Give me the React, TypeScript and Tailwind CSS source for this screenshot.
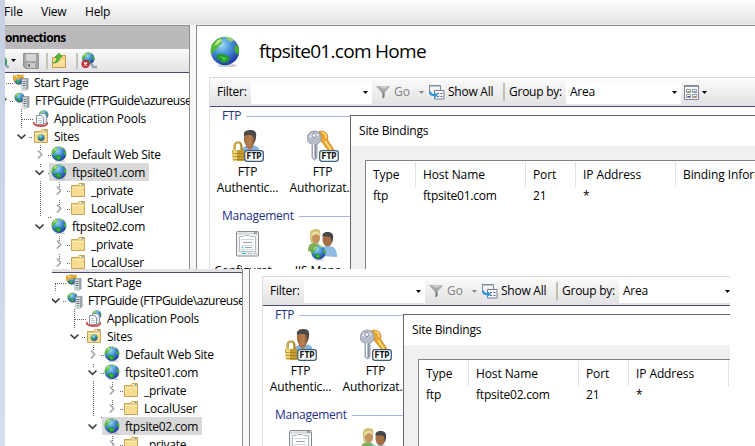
import React from "react";

const FONT = "font-['Open_Sans','Noto_Sans',sans-serif]";

function GlobeShape({ id }: { id: string }) {
  return (
    <>
      <defs>
        <radialGradient id={id} cx="0.38" cy="0.28" r="0.8">
          <stop offset="0" stopColor="#a5daf6" />
          <stop offset="0.4" stopColor="#4a96d6" />
          <stop offset="0.8" stopColor="#2a4bb2" />
          <stop offset="1" stopColor="#1f3890" />
        </radialGradient>
      </defs>
      <ellipse cx="17" cy="29.6" rx="10" ry="1.8" fill="#777" opacity="0.35" />
      <circle cx="15" cy="15" r="14.2" fill={`url(#${id})`} />
      <path d="M5 5C8 2 11 1 13 2L11 5L12 8L9 9L7 13L4 15L1 19C0 13 1 8 5 5Z" fill="#55b83c" />
      <path d="M7 5C9 3 11 3 12 4L8 8L4 10Z" fill="#c5eb83" />
      <path d="M15 1C18 0 22 2 24 4L21 6L18 4Z" fill="#9ad46e" />
      <path d="M26 8C29 11 30 15 28 19L25 16L24 12Z" fill="#46b02f" />
      <path d="M8 18L13 18L20 21L18 26L13 27L9 24L6 21Z" fill="#239b2c" />
      <path d="M10 20L17 22L14 25Z" fill="#49c93e" />
    </>
  );
}

function Globe({ id, className }: { id: string; className: string }) {
  return (
    <svg viewBox="0 0 30 31" className={className}>
      <GlobeShape id={id} />
    </svg>
  );
}

function ServerIcon({ id, star }: { id: string; star?: boolean }) {
  return (
    <svg viewBox="0 0 16 17" className="h-[17px] w-4 shrink-0">
      <g transform="scale(.35) translate(1 1)">
        <GlobeShape id={id} />
      </g>
      {star && <path d="M0 1L3 2L5 0L7 2L10 0L11 4L8 4L6 6L4 4L2 8L0 5Z" fill="#eba431" />}
      {star && <path d="M2 2L5 2L4 4Z" fill="#ffe493" />}
      <path d="M8.500 5L11 4H15.500V15L13 16.500H8.500Z" fill="#9da4ab" />
      <path d="M9 5.500H13V16H9Z" fill="#d9dee3" />
      <path d="M9.500 7.500H12.500M9.500 9.500H12.500M9.500 11.500H12.500" stroke="#68727c" />
      <path d="M10 14H12" stroke="#43b348" />
    </svg>
  );
}

function PoolsIcon({ id }: { id: string }) {
  return (
    <svg viewBox="0 0 16 17" className="h-[17px] w-4 shrink-0">
      <g transform="translate(6 0) scale(.32)">
        <GlobeShape id={id} />
      </g>
      <path d="M1 12C0 15 4 16 8 16C12 16 15 15 14 12" fill="none" stroke="#d25050" strokeWidth="1.8" />
      <path d="M6.500 3.500H11.500L13.500 6V13.500H6.500Z" fill="#e9eef2" stroke="#8799a8" />
      <path d="M3.500 5.500H8.500L10.500 8V14.500H3.500Z" fill="#fff" stroke="#8593a0" />
      <path d="M5 8.500H8M5 10.500H9M5 12.500H9" stroke="#bcc5cd" />
    </svg>
  );
}

function FolderIcon({ web, id }: { web?: boolean; id: string }) {
  return (
    <svg viewBox="0 0 16 16" className="h-4 w-4 shrink-0">
      <path d="M1.500 3.500H7.500L9 1.500H14.500V14.500H1.500Z" fill="#f0cd77" stroke="#c9a654" />
      <path d="M2 5H14V14H2Z" fill="#f7dc94" />
      <path d="M2 5.500H14" stroke="#fff0bf" />
      <path d="M9.500 2.500H13.500" stroke="#fff" />
      <path d="M11.500 2.500H13.500" stroke="#4c99d6" />
      {web && (
        <g transform="translate(4.500 6) scale(.24)">
          <GlobeShape id={id} />
        </g>
      )}
    </svg>
  );
}

type Kind = "start" | "server" | "pools" | "sites" | "site" | "folder";
type Row = { label: string; kind: Kind; pad: string; open?: boolean; leaf?: boolean; tracking?: string };

const rows: Row[] = [
  { label: "Start Page", kind: "start", pad: "pl-[2px]", leaf: true },
  { label: "FTPGuide (FTPGuide\\azureuse", kind: "server", pad: "pl-[3px]", open: true, tracking: "tracking-[-0.46px]" },
  { label: "Application Pools", kind: "pools", pad: "pl-[22px]", leaf: true },
  { label: "Sites", kind: "sites", pad: "pl-[22px]", open: true },
  { label: "Default Web Site", kind: "site", pad: "pl-[40px]" },
  { label: "ftpsite01.com", kind: "site", pad: "pl-[40px]", open: true },
  { label: "_private", kind: "folder", pad: "pl-[59px]" },
  { label: "LocalUser", kind: "folder", pad: "pl-[59px]" },
  { label: "ftpsite02.com", kind: "site", pad: "pl-[40px]", open: true },
  { label: "_private", kind: "folder", pad: "pl-[59px]" },
  { label: "LocalUser", kind: "folder", pad: "pl-[59px]" },
];

function TreeIcon({ kind, id }: { kind: Kind; id: string }) {
  if (kind === "start") return <ServerIcon id={id} star />;
  if (kind === "server") return <ServerIcon id={id} />;
  if (kind === "pools") return <PoolsIcon id={id} />;
  if (kind === "sites") return <FolderIcon id={id} web />;
  if (kind === "folder") return <FolderIcon id={id} />;
  return <Globe id={id} className="h-4 w-4 shrink-0" />;
}

function Tree({ name, selected }: { name: string; selected: string }) {
  return (
    <div className="relative w-[260px] bg-white">
      <svg className="absolute inset-0 h-[200px] w-[110px]" fill="none" stroke="#666" strokeDasharray="1 1">
        <path d="M8.500 11V18M8 10.500H20M16 28.500H20M27.500 36V56M28 46.500H39M35 64.500H39M54 82.500H58M54 100.500H58M46.500 108V144M54 144.500H58M73 118.500H77M73 136.500H77M73 172.500H77M73 190.500H77M65.500 109V114M65.500 127V132M65.500 163V168M65.500 181V186M46.500 72V77M46.500 91V95" />
      </svg>
      {rows.map((r, i) => (
        <div key={i} className={`relative flex h-[18px] items-center ${r.pad}`}>
          <svg viewBox="0 0 11 10" className="mr-[6px] h-[10px] w-[11px] shrink-0" fill="none" strokeWidth="1.7">
            {!r.leaf && r.open && <path d="M1.500 3.500L5.500 7.300L9.500 3.500" stroke="#404040" />}
            {!r.leaf && !r.open && <path d="M4 1.500L7.600 5.500L4 9.500" stroke="#a6a6a6" />}
          </svg>
          <div
            className={`flex h-[18px] items-center gap-1 ${
              r.label === selected ? "-ml-[2px] bg-[#d9d9d9] pr-[4px] pl-[2px]" : ""
            }`}
          >
            <TreeIcon kind={r.kind} id={`${name}-t${i}`} />
            <span className={`ml-px leading-[17px] whitespace-nowrap ${r.tracking ?? "tracking-[-0.25px]"}`}>
              {r.label}
            </span>
          </div>
        </div>
      ))}
    </div>
  );
}

function Caret({ className, dim }: { className: string; dim?: boolean }) {
  return (
    <svg viewBox="0 0 5 3" className={`h-[3px] w-[5px] shrink-0 ${className}`}>
      <path d="M0 0H5L2.500 3Z" fill={dim ? "#888" : "#000"} />
    </svg>
  );
}

function FilterBar() {
  return (
    <div className="flex h-[30px] w-[620px] items-center border-t border-b border-t-[#d9d9d9] border-b-[#4a4a72] bg-linear-to-b from-[#fcfcfc] to-[#e2e0e2] pl-[7px] whitespace-nowrap">
      <span className="w-[34px] tracking-[-0.25px]">Filter:</span>
      <div className="flex h-[23px] w-[121px] items-center justify-end bg-white pr-[4px]">
        <Caret className="" />
      </div>
      <svg viewBox="0 0 15 14" className="ml-[4px] h-[14px] w-[15px] shrink-0">
        <path d="M0 1L14 1.500L9 7V12L6 13.500V8Z" fill="#a8a8a8" />
        <path d="M2 1.500H12L8 4Z" fill="#d2d2d2" />
        <path d="M6 7L7.500 8V13" stroke="#7f7f7f" fill="none" />
      </svg>
      <span className="ml-[3px] w-[27px] text-[#808080]">Go</span>
      <Caret className="-ml-[2px]" dim />
      <svg viewBox="0 0 17 16" className="ml-[4px] h-4 w-[17px] shrink-0">
        <path d="M1 1.500H12.500V6M1.500 1V9" fill="none" stroke="#808c98" />
        <path d="M2 2.500H12" stroke="#bdc7d0" />
        <path d="M6.500 6.500H16V15H6.500Z" fill="#f3f7fb" stroke="#77818d" />
        <path d="M9 9.500H11M12.500 9.500H14.500M9 12.500H11M12.500 12.500H14.500" stroke="#575f99" />
        <path d="M1 9C2 12 4 12 6 12V14.500L10 11L6 8V10C4 10 3 9 3 7Z" fill="#2f91d7" />
      </svg>
      <span className="ml-[3px] w-[55px] tracking-[-0.25px]">Show All</span>
      <div className="h-[18px] w-[2px] bg-[#c0bfae]" />
      <span className="ml-[4px] w-[57px] tracking-[-0.25px]">Group by:</span>
      <div className="flex h-[23px] w-[115px] items-center justify-between bg-white pr-[4px] pl-[4px]">
        <span className="tracking-[-0.25px]">Area</span>
        <Caret className="" />
      </div>
      <svg viewBox="0 0 15 15" className="ml-[3px] h-[15px] w-[15px] shrink-0">
        <path d="M.5 .5H14.500V14.500H.5Z" fill="#f4f5f6" stroke="#7f8790" />
        <path d="M1 1.500H14" stroke="#929ba4" />
        <path d="M2.500 4.500H6.500V7.500H2.500ZM8.500 4.500H12.500V7.500H8.500ZM2.500 9.500H6.500V12.500H2.500ZM8.500 9.500H12.500V12.500H8.500Z" fill="#fff" stroke="#949aa1" />
        <path d="M3.500 6.500H6" stroke="#80a22e" />
        <path d="M9.500 6.500H12" stroke="#3ea0cf" />
        <path d="M3.500 11.500H6" stroke="#5347b4" />
        <path d="M9.500 11.500H12" stroke="#d5734b" />
      </svg>
      <Caret className="ml-[3px]" />
    </div>
  );
}

function FtpTag() {
  return (
    <>
      <rect x="12.700" y="20.700" width="18.600" height="10.600" rx="2.500" fill="#fff" stroke="#3d5d77" strokeWidth="1.300" />
      <text x="14.500" y="29" fontSize="8" fontWeight="700" fontFamily="DejaVu Sans, sans-serif" textLength="15" lengthAdjust="spacingAndGlyphs" fill="#111">
        FTP
      </text>
    </>
  );
}

function AuthIcon({ id }: { id: string }) {
  return (
    <svg viewBox="0 0 32 32" className="h-8 w-8">
      <defs>
        <linearGradient id={id}>
          <stop stopColor="#a26a3e" />
          <stop offset=".6" stopColor="#b98255" />
          <stop offset="1" stopColor="#714626" />
        </linearGradient>
      </defs>
      <path d="M9 22C10 17 14 15 18 15C24 15 28 17 28 23Z" fill="#84b1de" />
      <path d="M14 14H21V17L18 20L14 17Z" fill="#a9704a" />
      <ellipse cx="17.500" cy="9" rx="5.700" ry="7.700" fill={`url(#${id})`} />
      <path d="M12 6C11 1 15 0 19 0C25 0 25 5 23 12L21.500 6C18 4.500 15 4.500 12 6Z" fill="#4a4a4a" />
      <path d="M2.500 21V17C2.500 11 9.500 11 9.500 17V21" fill="none" stroke="#a58121" strokeWidth="2.200" />
      <path d="M2.200 20V16.500C2.500 12.500 7 11.500 8.700 14.500" fill="none" stroke="#e4cb70" />
      <path d="M0 20H12V31H1Z" fill="#c49b2c" />
      <path d="M1 20H5V31H1Z" fill="#eed477" />
      <path d="M1 23.500H12M1 26.500H12M1 29.500H12" stroke="#987621" strokeWidth=".6" />
      <FtpTag />
    </svg>
  );
}

function KeysIcon() {
  return (
    <svg viewBox="0 0 32 32" className="h-8 w-8">
      <path d="M12 1.500C18 0 22 4 20.500 10L27 20H21L15 12L11 9Z" fill="#eba52e" stroke="#c4811e" strokeWidth=".8" />
      <path d="M15 2.500C18 2.500 19 5 19 8M18 11L24 20" stroke="#ffdf84" fill="none" strokeWidth="1.600" />
      <path d="M1 5C3 0 11 0 13 4C16 9 13 13 10 14V28L7.500 30L5 28V14C0 13-1 8 1 5Z" fill="#b6bdc8" stroke="#858d9c" strokeWidth=".8" />
      <path d="M2 7C4 2 9 2 12 5L8 8Z" fill="#e9edf2" />
      <path d="M6.500 14V28" stroke="#f4f6f8" />
      <circle cx="7" cy="5.500" r="2" fill="#fff" stroke="#7c8594" />
      <path d="M8.500 14V28" stroke="#8b93a1" />
      <FtpTag />
    </svg>
  );
}

function ConfigIcon() {
  return (
    <svg viewBox="0 0 24 26" className="h-[26px] w-6">
      <rect x=".5" y=".5" width="22" height="24.500" rx="1" fill="#f1f2f3" stroke="#858a8e" />
      <path d="M1 2.500H22" stroke="#d2d6da" strokeWidth="2" />
      <path d="M18 2H21" stroke="#536777" />
      <path d="M3.500 5.500H8L9 4.500H13L14 5.500H19.500V20.500H3.500Z" fill="#fff" stroke="#b5bac0" />
      <path d="M5 8.500H18M5 14.500H18M5 18.500H18" stroke="#d4d8dc" />
      <path d="M7 11.500H16M9 16.500H16" stroke="#95a0ab" />
      <circle cx="6.500" cy="16.500" r=".8" fill="#4aa9cc" />
      <path d="M6 22.500H10" stroke="#16bfe5" />
      <path d="M12 22.500H16M17.500 22.500H21" stroke="#b1b6bb" />
    </svg>
  );
}

function UsersIcon({ id }: { id: string }) {
  return (
    <svg viewBox="0 0 32 32" className="h-8 w-8">
      <path d="M1 22C1 16 3 14 8 14C12 14 15 17 14 23L7 24Z" fill="#87ae59" />
      <path d="M15 27C13 19 16 17 21 17C27 17 30 20 30 28Z" fill="#8dbbe2" />
      <path d="M3 8C2 2 5 0 9 0C14 0 14 3 13 8L12 14H4Z" fill="#d2c176" />
      <ellipse cx="9" cy="8.500" rx="4" ry="6" fill="#c49163" />
      <path d="M4 8C4 1 13 1 13 7L9 5Z" fill="#eadd9e" />
      <ellipse cx="20.500" cy="11" rx="5" ry="6.500" fill="#a56f45" />
      <path d="M15.500 8C15 3 19 3 21 3C27 3 27 8 25 14L23.500 8C20 7 18 7 15.500 8Z" fill="#464646" />
      <g transform="translate(4 16) scale(.5)">
        <GlobeShape id={id} />
      </g>
    </svg>
  );
}

function Feature({ icon, lines }: { icon: React.ReactNode; lines: string[] }) {
  return (
    <div className="flex w-[75px] flex-col items-center">
      <div className="flex h-[34px] items-start justify-center">{icon}</div>
      {lines.map((l) => (
        <span key={l} className="h-4 leading-4 tracking-[-0.15px] whitespace-nowrap">
          {l}
        </span>
      ))}
    </div>
  );
}

function GroupTitle({ text }: { text: string }) {
  return (
    <div className="flex h-[18px] items-center gap-[5px] pl-[12px] text-[#1e2f87]">
      <span className="leading-[18px] tracking-[-0.25px]">{text}</span>
      <div className="h-px flex-1 bg-[#a9b5df]" />
    </div>
  );
}

const cols = [
  { head: "Type", w: "w-[50px]" },
  { head: "Host Name", w: "w-[110px]" },
  { head: "Port", w: "w-[50px]" },
  { head: "IP Address", w: "w-[100px]" },
  { head: "Binding Informa", w: "w-[110px]" },
];

function BindingsDialog({ host }: { host: string }) {
  const values = ["ftp", host, "21", "*", ""];
  return (
    <div className="absolute top-[8px] left-[140px] h-[300px] w-[500px] border-t border-l border-[#66666a] bg-[#f0f0f0]">
      <div className="flex h-[30px] items-center bg-white pl-[8px]">
        <span className="tracking-[-0.2px]">Site Bindings</span>
      </div>
      <div className="mt-[14px] ml-[14px] h-[260px] w-[500px] border-t border-l border-[#82828a] bg-white pt-px">
        <div className="flex h-[25px]">
          {cols.map((c) => (
            <div key={c.head} className={`${c.w} flex shrink-0 items-center border-r border-[#e2e2e2] pl-[7px]`}>
              <span className="tracking-[-0.1px] whitespace-nowrap">{c.head}</span>
            </div>
          ))}
        </div>
        <div className="flex h-[18px]">
          {cols.map((c, i) => (
            <div key={c.head} className={`${c.w} flex shrink-0 items-center pl-[7px]`}>
              <span className="tracking-[-0.2px] whitespace-nowrap">{values[i]}</span>
            </div>
          ))}
        </div>
      </div>
    </div>
  );
}

function Features({ name, host }: { name: string; host: string }) {
  return (
    <div className="ml-[12px] w-[620px]">
      <div className="border-l border-[#dcdcdc]">
        <FilterBar />
      </div>
      <div className="relative h-[200px] border-l border-[#dcdcdc]">
        <GroupTitle text="FTP" />
        <div className="mt-[5px] flex">
          <Feature icon={<AuthIcon id={`${name}-face`} />} lines={["FTP", "Authentic..."]} />
          <Feature icon={<KeysIcon />} lines={["FTP", "Authorizat..."]} />
        </div>
        <div className="mt-[11px]">
          <GroupTitle text="Management" />
        </div>
        <div className="mt-[4px] flex">
          <Feature
            icon={
              <div className="h-[36px] shrink-0 pt-[2px]">
                <ConfigIcon />
              </div>
            }
            lines={["Configurat..."]}
          />
          <Feature icon={<UsersIcon id={`${name}-users`} />} lines={["IIS Mana..."]} />
        </div>
        <BindingsDialog host={host} />
      </div>
    </div>
  );
}

function ConnectionsBar() {
  return (
    <div className="flex h-6 items-center border-b border-[#4a4a72] bg-linear-to-b from-[#fbfbfb] to-[#e3e1e3]">
      <svg viewBox="0 0 5 12" className="mt-[2px] h-3 w-[5px]">
        <path d="M0 1L2 4V10H0Z" fill="#3a9f69" />
        <path d="M1 8L4 10V12H1Z" fill="#8ca4b9" />
      </svg>
      <Caret className="ml-px" />
      <svg viewBox="0 0 16 16" className="ml-[7px] h-4 w-4">
        <path d="M.5 .5H15.500V15.500H2.500L.5 13.500Z" fill="#a5a5a5" stroke="#929292" />
        <path d="M3 1H13V8H3Z" fill="#d4d4d4" />
        <path d="M4 10H12V15H4Z" fill="#c9c9c9" />
        <path d="M5 11H7V14H5Z" fill="#777" />
      </svg>
      <div className="ml-[7px] h-4 w-[2px] bg-[#c5c5b5]" />
      <svg viewBox="0 0 16 16" className="ml-[3px] h-4 w-4">
        <path d="M1.500 4.500H8L10 2.500H14.500V14.500H1.500Z" fill="#f3d47f" stroke="#c69c43" />
        <path d="M2 7H14V14H2Z" fill="#f9df98" />
        <path d="M2 10C5 9 6 7 6 4H4L8 0L11 4H9C9 8 6 10 2 10Z" fill="#4fb83d" stroke="#2c902d" strokeWidth=".6" />
      </svg>
      <div className="ml-[9px] h-4 w-[2px] bg-[#c5c5b5]" />
      <svg viewBox="0 0 17 17" className="ml-[3px] h-[17px] w-[17px]">
        <g transform="translate(1 0) scale(.43)">
          <GlobeShape id="disconnect" />
        </g>
        <path d="M10 11L12 15H16" fill="none" stroke="#94a6b5" strokeWidth="2.400" />
        <circle cx="4.500" cy="12" r="4" fill="#c02b35" />
        <path d="M3 10.500L6 13.500M6 10.500L3 13.500" stroke="#fff" strokeWidth="1.400" />
      </svg>
    </div>
  );
}

export default function App() {
  return (
    <div className={`flex h-[446px] w-[755px] overflow-hidden bg-white text-[12px] text-black ${FONT}`}>
      <div className="w-[5px] shrink-0 bg-linear-to-b from-[#c8d1e4] to-[#d4deec]" />
      <div className="flex w-[750px] flex-col">
        <section className="h-[269px] overflow-hidden bg-[#f7f7f7]">
          <nav className="flex h-[25px] items-center border-b border-[#efefef] bg-linear-to-b from-[#fdfdfd] to-[#e3e3e3]">
            <span className="-ml-px w-[37px]">File</span>
            <span className="w-[44px] tracking-[-0.2px]">View</span>
            <span className="tracking-[-0.2px]">Help</span>
          </nav>
          <div className="flex h-[244px] gap-[6px]">
            <div className="w-[185px] shrink-0 overflow-hidden border-t border-r border-[#8e8e8e] bg-white">
              <div className="flex h-[23px] items-center bg-[#bcb9bc] font-bold">
                <span className="tracking-[-0.6px]">onnections</span>
              </div>
              <ConnectionsBar />
              <div className="-ml-[11px]">
                <Tree name="a" selected="ftpsite01.com" />
              </div>
            </div>
            <div className="min-w-0 flex-1 overflow-hidden border-t border-l border-[#858b8d] bg-white">
              <div className="flex h-[51px] items-center pl-[13px]">
                <Globe id="home" className="h-[31px] w-[30px] shrink-0" />
                <span className="ml-[19px] text-[19px] tracking-[-0.7px] whitespace-nowrap">ftpsite01.com Home</span>
              </div>
              <Features name="a" host="ftpsite01.com" />
            </div>
          </div>
        </section>
        <section className="ml-[47px] flex h-[177px] w-[678px] gap-[6px] overflow-hidden bg-[#f7f7f7]">
          <div className="w-[191px] shrink-0 overflow-hidden border-r border-[#8e8e8e] bg-white">
            <div className="h-[4px] border-b border-[#4a4a72] bg-[#e3e1e3]" />
            <div className="-ml-[5px]">
              <Tree name="b" selected="ftpsite02.com" />
            </div>
          </div>
          <div className="min-w-0 flex-1 overflow-hidden border-l border-[#858b8d] bg-white pt-[7px]">
            <Features name="b" host="ftpsite02.com" />
          </div>
        </section>
      </div>
    </div>
  );
}
